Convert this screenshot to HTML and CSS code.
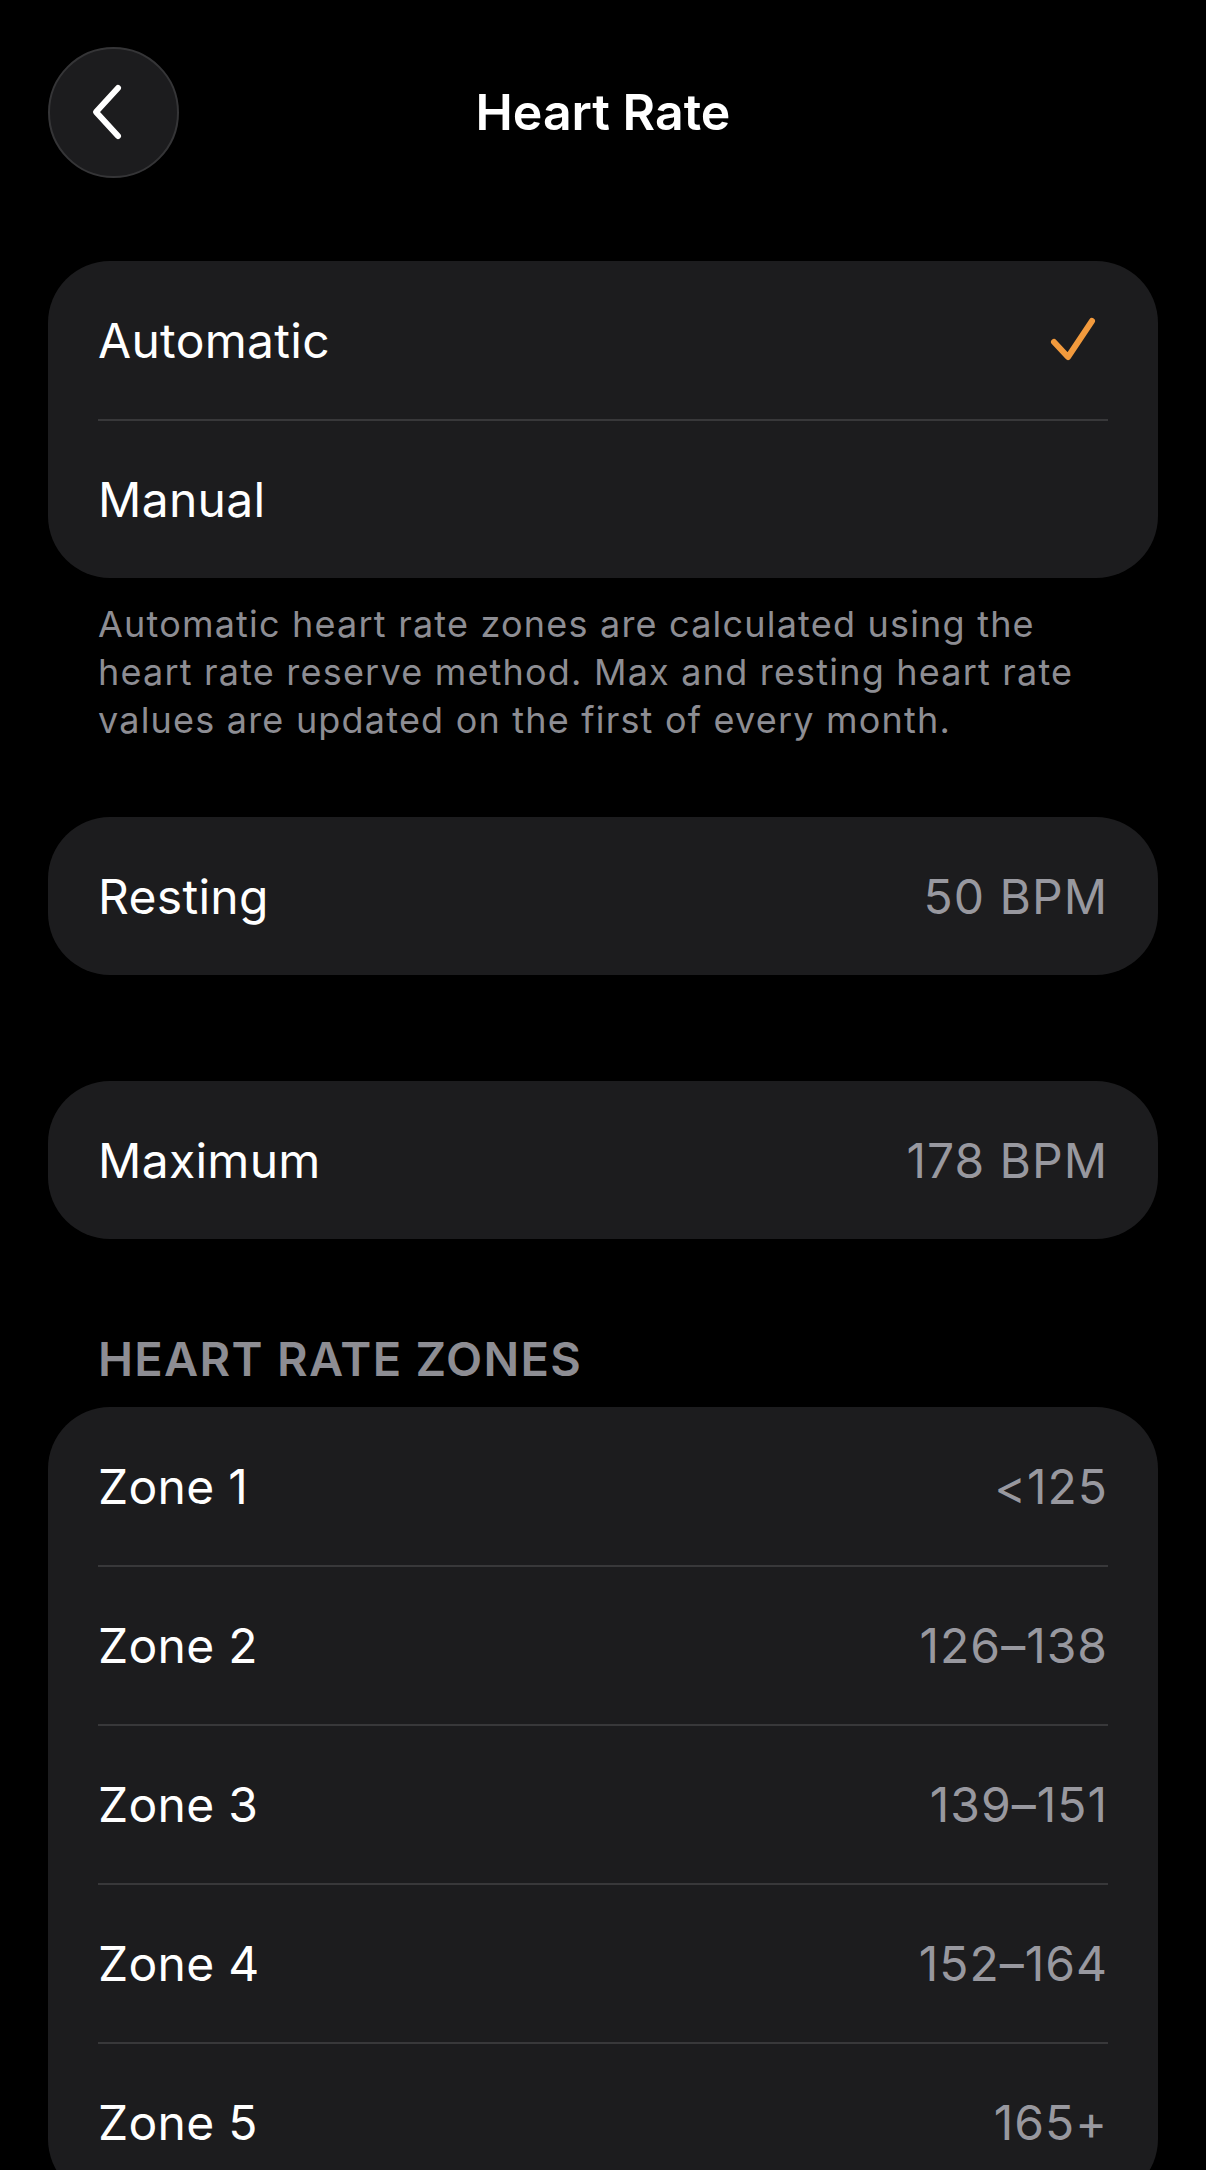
FILE: index.html
```html
<!DOCTYPE html>
<html lang="en">
<head>
    <meta charset="UTF-8">
    <meta name="viewport" content="width=device-width, initial-scale=1.0">
    <title>Heart Rate</title>
    <link rel="stylesheet" href="styles.css">
</head>
<body>
    <div class="page">
        <header class="top-bar">
            <button class="back-button" aria-label="Back">
                <svg width="40" height="60" viewBox="0 0 40 60">
                    <path d="M28 6 L6 30 L28 54" fill="none" stroke="#fff" stroke-width="6" stroke-linecap="round" stroke-linejoin="round"/>
                </svg>
            </button>
            <h1 class="title">Heart Rate</h1>
            <div class="spacer"></div>
        </header>

        <div class="card mode-card">
            <div class="row">
                <span class="label">Automatic</span>
                <svg class="check" width="46" height="46" viewBox="0 0 46 46">
                    <path d="M4 25 L18 40 L42 4" fill="none" stroke="#f29a3d" stroke-width="6" stroke-linecap="round" stroke-linejoin="round"/>
                </svg>
            </div>
            <div class="row">
                <span class="label">Manual</span>
            </div>
        </div>

        <p class="note">
            Automatic heart rate zones are calculated using the
            heart rate reserve method. Max and resting heart rate
            values are updated on the first of every month.
        </p>

        <div class="card single-card">
            <div class="row">
                <span class="label">Resting</span>
                <span class="value">50 BPM</span>
            </div>
        </div>

        <div class="card single-card max-card">
            <div class="row">
                <span class="label">Maximum</span>
                <span class="value">178 BPM</span>
            </div>
        </div>

        <h2 class="section-title">HEART RATE ZONES</h2>
        <div class="card zones-card">
            <div class="row">
                <span class="label">Zone 1</span>
                <span class="value">&lt;125</span>
            </div>
            <div class="row">
                <span class="label">Zone 2</span>
                <span class="value">126–138</span>
            </div>
            <div class="row">
                <span class="label">Zone 3</span>
                <span class="value">139–151</span>
            </div>
            <div class="row">
                <span class="label">Zone 4</span>
                <span class="value">152–164</span>
            </div>
            <div class="row">
                <span class="label">Zone 5</span>
                <span class="value">165+</span>
            </div>
        </div>
    </div>
</body>
</html>
```

FILE: styles.css
```css
body {
    margin: 0;
    background-color: #000;
    color: #fff;
    font-family: Inter, "Noto Sans", sans-serif;
}
.page {
    padding: 46px 48px 0;
}
.top-bar {
    display: grid;
    grid-template-columns: 131px 1fr 131px;
    align-items: center;
    height: 132px;
}
.back-button {
    width: 131px;
    height: 131px;
    border-radius: 50%;
    background-color: #1c1c1e;
    border: 2px solid #353537;
    display: flex;
    align-items: center;
    justify-content: center;
    padding: 0 8px 0 0;
    cursor: pointer;
}
.title {
    margin: 0;
    text-align: center;
    font-size: 50px;
    font-weight: 600;
}
.card {
    background-color: #1c1c1e;
    border-radius: 62px;
    overflow: hidden;
}
.row {
    display: flex;
    align-items: center;
    justify-content: space-between;
    height: 158px;
    margin: 0 50px;
    box-sizing: border-box;
}
.row + .row {
    border-top: 2px solid #38383a;
    height: 159px;
}
.label {
    font-size: 48px;
    letter-spacing: 0.3px;
}
.value {
    font-size: 48px;
    letter-spacing: 1px;
    color: #98989f;
}
.check {
    margin-right: 12px;
}
.mode-card {
    margin-top: 83px;
}
.note {
    margin: 22px 50px 0;
    font-size: 36px;
    letter-spacing: 1.2px;
    line-height: 48px;
    color: #8d8d93;
}
.single-card {
    margin-top: 73px;
}
.max-card {
    margin-top: 106px;
}
.section-title {
    margin: 90px 50px 0;
    font-size: 47px;
    letter-spacing: 1.3px;
    font-weight: 600;
    color: #8d8d93;
    line-height: 60px;
}
.zones-card {
    margin-top: 18px;
    margin-bottom: 40px;
}
```
